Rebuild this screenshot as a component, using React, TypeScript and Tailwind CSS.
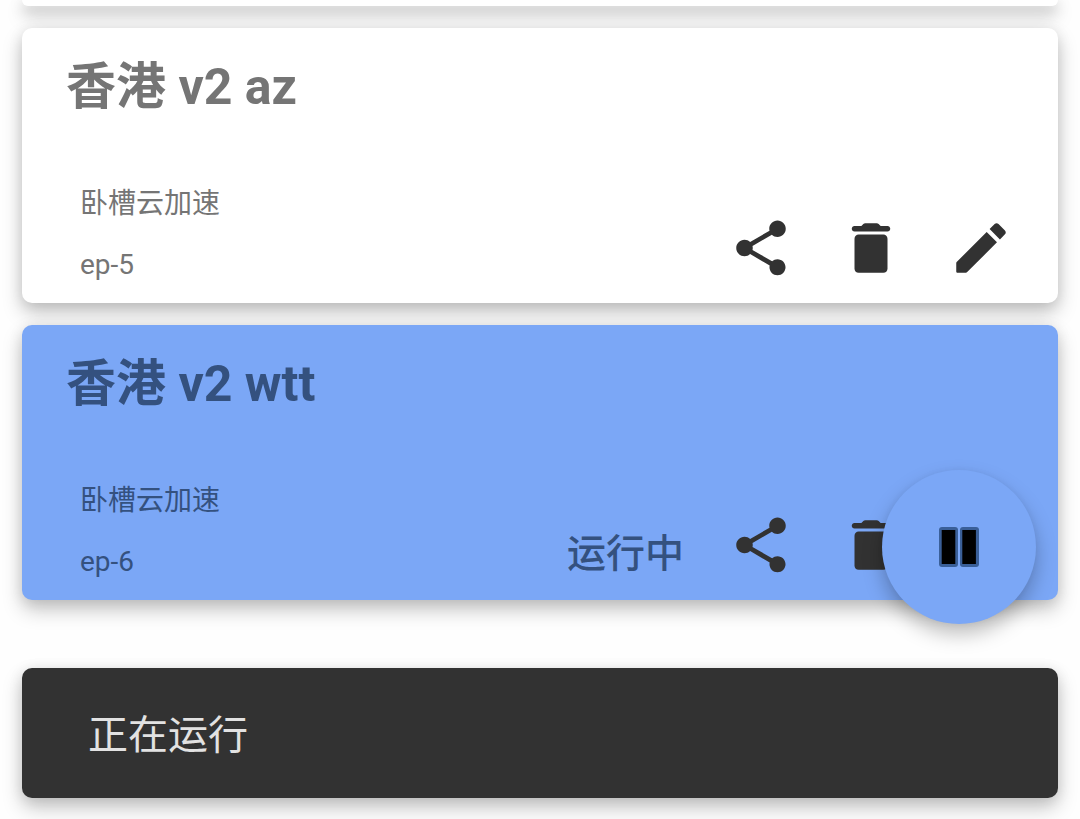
type Profile = { name: string; group: string; id: string; active: boolean };

const profiles: Profile[] = [
  { name: '香港 v2 az', group: '卧槽云加速', id: 'ep-5', active: false },
  { name: '香港 v2 wtt', group: '卧槽云加速', id: 'ep-6', active: true },
];

const SHARE =
  'M18 16.08c-.76 0-1.44.3-1.96.77L8.91 12.7c.05-.23.09-.46.09-.7s-.04-.47-.09-.7l7.05-4.11c.54.5 1.25.81 2.04.81 1.66 0 3-1.34 3-3s-1.34-3-3-3-3 1.34-3 3c0 .24.04.47.09.7L8.04 9.81C7.5 9.31 6.79 9 6 9c-1.66 0-3 1.34-3 3s1.34 3 3 3c.79 0 1.5-.31 2.04-.81l7.12 4.16c-.05.21-.08.43-.08.65 0 1.61 1.31 2.92 2.92 2.92s2.92-1.31 2.92-2.92-1.31-2.92-2.92-2.92z';
const TRASH =
  'M6 19.5c0 .83.67 1.5 1.5 1.5h9c.83 0 1.5-.67 1.5-1.5V8.6c0-.83-.67-1.5-1.5-1.5h-9C6.67 7.1 6 7.77 6 8.6v10.9zM18 4h-2.5l-.71-.71c-.18-.18-.44-.29-.7-.29H9.91c-.26 0-.52.11-.7.29L8.5 4H6c-.55 0-1 .45-1 1s.45 1 1 1h12c.55 0 1-.45 1-1s-.45-1-1-1z';
const EDIT =
  'M3 17.46v3.04c0 .28.22.5.5.5h3.04c.13 0 .26-.05.35-.15L17.81 9.94l-3.75-3.75L3.15 17.1c-.1.1-.15.22-.15.36zM20.71 7.04c.39-.39.39-1.02 0-1.41l-2.34-2.34c-.39-.39-1.02-.39-1.41 0l-1.83 1.83 3.75 3.75 1.83-1.83z';

function IconButton({ label, path }: { label: string; path: string }) {
  return (
    <button type="button" aria-label={label} className="text-[#323232]">
      <svg viewBox="0 0 24 24" fill="currentColor" className="block size-[66px]">
        <path d={path} />
      </svg>
    </button>
  );
}

function ProfileCard({ profile }: { profile: Profile }) {
  const tone = profile.active ? 'bg-[#7ba7f6] text-[#34517f]' : 'bg-white text-[#757575]';
  return (
    <li
      className={`rounded-[10px] px-11 pt-6 pb-[22px] shadow-[0_10px_20px_rgba(0,0,0,0.22),0_2px_14px_rgba(0,0,0,0.1)] ${tone}`}
    >
      <h2 className="text-[50px] leading-[70px] font-bold">{profile.name}</h2>
      <div className="mt-[65px] flex items-end">
        <div className="flex flex-1 flex-col gap-7 pl-[14px] text-[28px] leading-[33px]">
          <p>{profile.group}</p>
          <p>{profile.id}</p>
        </div>
        {profile.active && (
          <p className="mr-11 text-[39px] leading-[48px] font-medium">运行中</p>
        )}
        <div className="flex gap-11">
          <IconButton label="分享" path={SHARE} />
          <IconButton label="删除" path={TRASH} />
          <IconButton label="编辑" path={EDIT} />
        </div>
      </div>
    </li>
  );
}

export default function App() {
  return (
    <div className="relative flex min-h-screen flex-col overflow-hidden bg-[#fefefe] px-[22px] pb-[21px] font-[Roboto,'Noto_Sans_CJK_SC',sans-serif]">
      <ul className="flex flex-col gap-[22px]">
        <li className="h-[6px] rounded-b-[10px] bg-white shadow-[0_10px_18px_rgba(0,0,0,0.25),0_4px_14px_rgba(0,0,0,0.25)]" />
        {profiles.map((profile) => (
          <ProfileCard key={profile.id} profile={profile} />
        ))}
      </ul>
      <div
        role="status"
        className="mt-auto rounded-[10px] bg-[#323232] px-[66px] pt-9 pb-[30px] text-[40px] leading-[64px] text-[#e2e2e2] shadow-[0_10px_20px_rgba(0,0,0,0.22),0_2px_14px_rgba(0,0,0,0.1)]"
      >
        正在运行
      </div>
      <button
        type="button"
        aria-label="暂停"
        className="absolute right-11 bottom-[195px] flex size-[154px] items-center justify-center rounded-full bg-[#7ba7f6] shadow-[0_10px_20px_rgba(0,0,0,0.26),0_0_6px_rgba(0,0,0,0.04)]"
      >
        <svg viewBox="0 0 40 40" className="size-10">
          <rect x="0" y="0" width="19" height="40" rx="3" fill="#3a5f98" />
          <rect x="21" y="0" width="19" height="40" rx="3" fill="#3a5f98" />
          <rect x="2.7" y="3" width="13.6" height="34" fill="#000" />
          <rect x="23.3" y="3" width="13.6" height="34" fill="#000" />
        </svg>
      </button>
    </div>
  );
}
